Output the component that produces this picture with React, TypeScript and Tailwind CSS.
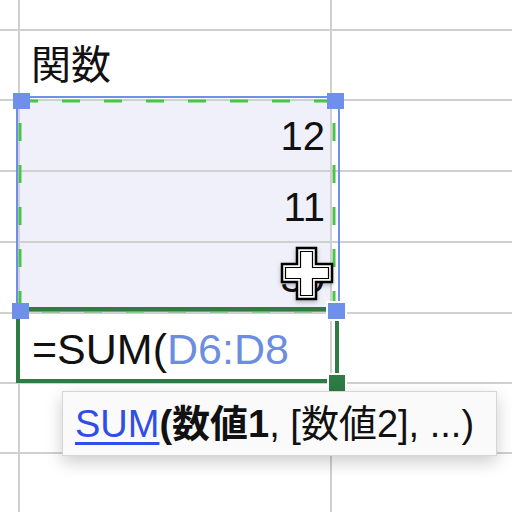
import React from "react";

const font = { fontFamily: '"Liberation Sans", "Noto Sans CJK JP", sans-serif' };

function Row({
  h,
  children,
  selected,
}: {
  h: string;
  children?: React.ReactNode;
  selected?: boolean;
}) {
  return (
    <div className={`flex border-b-2 border-[#d0d0d0] ${h}`}>
      <div className="w-[20px] shrink-0 border-r-2 border-[#d0d0d0]" />
      <div
        className={`w-[312px] shrink-0 border-r-2 border-[#d0d0d0] flex items-center ${
          selected ? "bg-[#f0f0fb]" : ""
        }`}
      >
        {children}
      </div>
      <div className="flex-1" />
    </div>
  );
}

function Handle({ className }: { className: string }) {
  return <div className={`absolute w-[17px] h-[16px] bg-[#6e8fea] ${className}`} />;
}

export default function App() {
  return (
    <div className="relative w-[512px] h-[512px] overflow-hidden bg-white text-[#111]" style={font}>
      <div className="flex flex-col">
        <Row h="h-[31px]" />
        <Row h="h-[70px]">
          <span className="pl-[11px] text-[40px] leading-none">関数</span>
        </Row>
        <Row h="h-[71px]" selected>
          <span className="ml-auto pr-[5px] text-[40px] leading-none">12</span>
        </Row>
        <Row h="h-[71px]" selected>
          <span className="ml-auto pr-[5px] text-[40px] leading-none">11</span>
        </Row>
        <Row h="h-[71px]" selected>
          <span className="ml-auto pr-[5px] text-[40px] leading-none">30</span>
        </Row>
        <Row h="h-[70px]">
          <span className="pl-[12px] pt-[2px] text-[43px] leading-none whitespace-nowrap">
            =SUM(<span className="text-[#6d8ee0]">D6:D8</span>
          </span>
        </Row>
        <Row h="h-[70px]" />
        <Row h="h-[60px]" />
      </div>

      {/* selection: blue outline with marching ants */}
      <svg className="absolute left-0 top-0" width="512" height="512" viewBox="0 0 512 512">
        <rect x="17" y="97" width="322" height="214" fill="none" stroke="#6e8fea" strokeWidth="2" />
        <rect
          x="20"
          y="101"
          width="314"
          height="210"
          fill="none"
          stroke="#4cc44a"
          strokeWidth="3"
          strokeDasharray="18 24"
        />
      </svg>

      {/* active formula cell */}
      <div className="absolute left-[16px] top-[307px] w-[323px] h-[76px] border-4 border-[#2f7b45]" />

      <Handle className="left-[13px] top-[93px]" />
      <Handle className="left-[327px] top-[93px]" />
      <Handle className="left-[12px] top-[303px]" />
      <Handle className="left-[328px] top-[303px] border-2 border-white box-content -translate-x-[2px] -translate-y-[2px]" />
      <div className="absolute left-[327px] top-[373px] w-[16px] h-[16px] bg-[#2f7b45] border-2 border-white box-content" />

      {/* crosshair cursor */}
      <svg
        className="absolute left-[279px] top-[245px]"
        width="56"
        height="58"
        viewBox="0 0 56 58"
        style={{ filter: "drop-shadow(0 2px 2px rgba(0,0,0,0.25))" }}
      >
        <path
          d="M18 3 H37 V19 H53 V37 H37 V54 H18 V37 H3 V19 H18 Z"
          fill="#fff"
          stroke="#000"
          strokeWidth="2.5"
          strokeLinejoin="miter"
        />
        <path
          d="M21.5 6.5 H33.5 V22.5 H49.5 V33.5 H33.5 V50.5 H21.5 V33.5 H6.5 V22.5 H21.5 Z"
          fill="none"
          stroke="#000"
          strokeWidth="1.2"
        />
      </svg>

      {/* function tooltip */}
      <div className="absolute left-[62px] top-[391px] w-[435px] h-[65px] bg-[#fafafa] border border-[#d6d6d6] shadow-[0_6px_16px_rgba(0,0,0,0.2)] flex items-center pl-[12px] text-[38px] leading-none whitespace-nowrap">
        <span className="text-[#2f4ee6] underline decoration-[3px] underline-offset-[5px]">SUM</span>
        <span className="font-bold">(数値1</span>
        <span>, [数値2], ...)</span>
      </div>
    </div>
  );
}
